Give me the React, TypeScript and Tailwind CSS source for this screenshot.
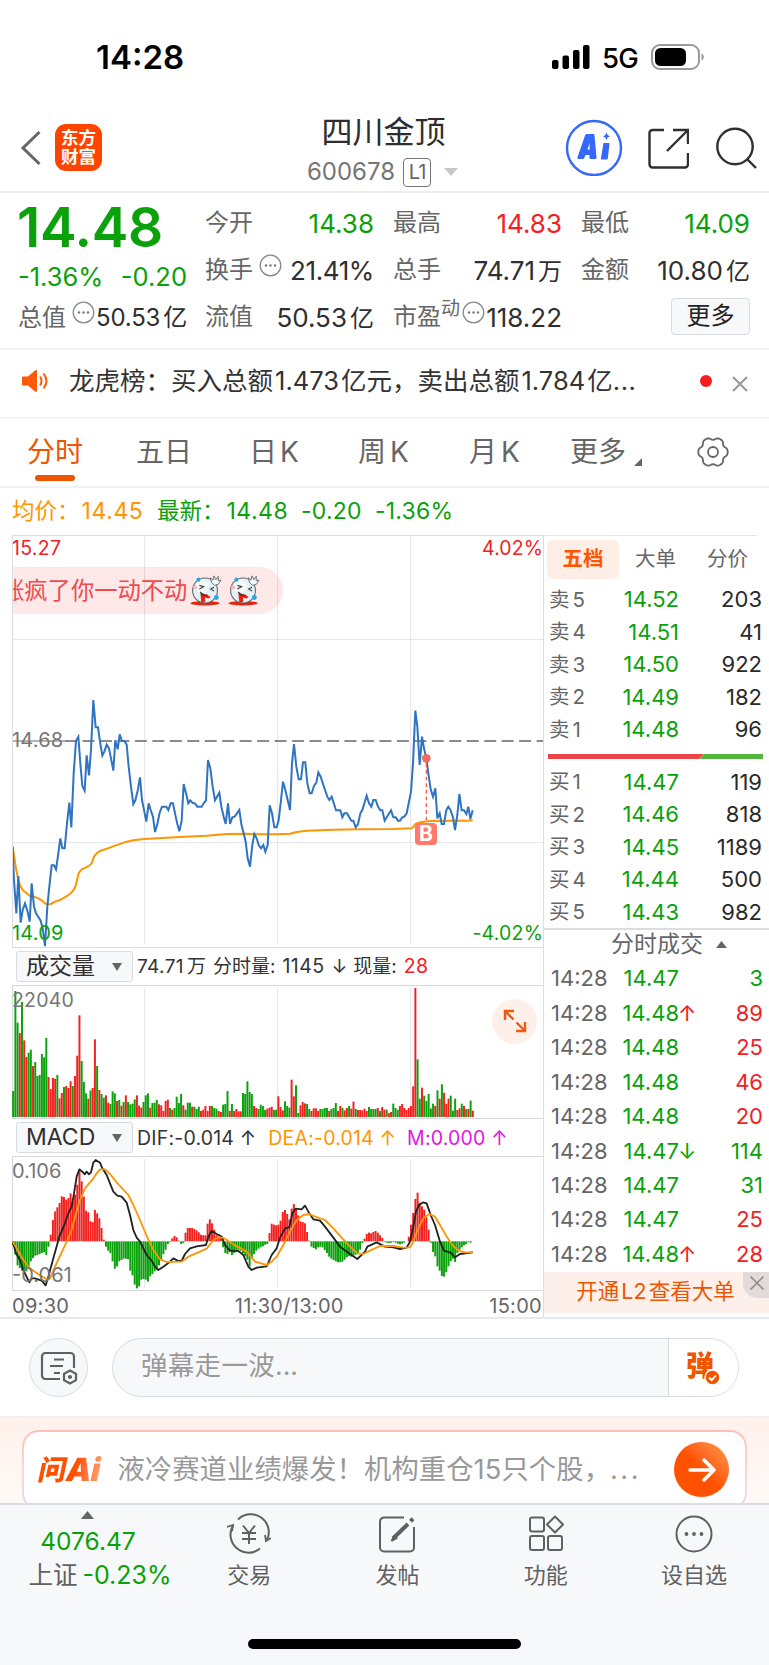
import type { ReactNode } from 'react'

const GREEN = 'text-[#0aa10a]'
const RED = 'text-[#f3201f]'

const asks = [
  ['卖5', '14.52', '203'],
  ['卖4', '14.51', '41'],
  ['卖3', '14.50', '922'],
  ['卖2', '14.49', '182'],
  ['卖1', '14.48', '96'],
]

const bids = [
  ['买1', '14.47', '119'],
  ['买2', '14.46', '818'],
  ['买3', '14.45', '1189'],
  ['买4', '14.44', '500'],
  ['买5', '14.43', '982'],
]

const ticks = [
  { price: '14.47', dir: '', vol: '3', up: false },
  { price: '14.48', dir: '↑', vol: '89', up: true },
  { price: '14.48', dir: '', vol: '25', up: true },
  { price: '14.48', dir: '', vol: '46', up: true },
  { price: '14.48', dir: '', vol: '20', up: true },
  { price: '14.47', dir: '↓', vol: '114', up: false },
  { price: '14.47', dir: '', vol: '31', up: false },
  { price: '14.47', dir: '', vol: '25', up: true },
  { price: '14.48', dir: '↑', vol: '28', up: true },
]

// chart series share one x axis: 240 minutes over 1596 units, starting at 36
const BAR = 6.63

const priceLine =
  '38,680 42,780 49,880 55,768 62,908 68,870 75,850 82,872 89,905 95,790 102,860 108,880 122,902 128,925 135,978 142,860 148,800 155,736 162,736 168,748 175,700 181,655 187,685 194,685 201,610 208,548 214,622 221,460 228,363 235,350 241,430 247,498 254,512 260,406 267,466 273,390 280,240 287,322 294,322 300,365 307,407 313,395 320,374 327,385 333,415 340,452 346,360 353,388 359,343 366,363 373,363 380,374 386,440 393,500 400,552 406,541 413,512 420,472 426,540 433,575 439,605 446,550 452,570 459,590 465,636 472,612 479,578 486,560 499,560 505,570 512,550 519,550 525,580 532,612 538,634 545,602 551,492 558,520 565,550 571,541 578,549 585,550 592,560 605,560 611,550 618,541 624,420 631,445 638,500 645,541 651,530 658,518 664,560 671,590 677,612 684,550 690,612 697,592 704,590 711,580 718,570 724,612 731,640 737,665 743,715 750,740 757,675 763,642 770,655 776,675 783,685 790,675 796,695 803,675 809,556 816,580 823,622 830,622 836,600 843,540 849,485 856,510 863,540 870,570 876,430 882,372 889,440 896,478 903,478 909,427 916,427 922,490 929,520 935,520 942,498 949,488 955,457 962,470 970,495 982,530 988,540 995,530 1008,571 1021,571 1027,592 1033,580 1041,580 1054,602 1060,602 1067,622 1074,612 1081,580 1087,570 1100,527 1107,550 1114,560 1120,540 1127,540 1134,560 1141,571 1147,571 1154,602 1160,592 1173,571 1180,592 1187,592 1194,602 1200,602 1207,592 1213,590 1220,580 1233,515 1239,430 1246,272 1252,320 1259,435 1266,350 1272,385 1279,415 1285,460 1292,508 1299,530 1306,505 1312,595 1319,580 1325,612 1332,612 1339,570 1345,560 1352,571 1359,592 1365,630 1372,585 1378,522 1385,571 1392,571 1399,582 1405,560 1411,597 1418,571'

const averageLine =
  '38,680 48,745 55,780 61,798 68,810 78,818 90,828 102,830 115,835 126,842 135,850 142,853 152,852 165,845 180,840 193,833 205,825 214,818 222,808 227,797 230,785 235,762 239,755 245,748 258,742 270,735 275,730 280,715 284,707 290,700 300,693 330,683 345,677 365,670 380,665 400,661 433,657 540,651 620,647 680,642 740,641 770,643 832,643 870,641 890,636 920,632 1000,629 1080,628 1180,627 1235,625 1240,621 1245,613 1253,609 1265,606 1290,603 1350,602 1400,602 1418,601'

const volumes =
  'g78 g378 g283 r252 g345 r230 r180 g193 g202 r153 g165 g123 g126 g189 g179 g237 r120 r84 r117 r115 g126 r56 r72 g90 r93 r87 r107 g93 r123 r184 r305 g168 g105 g71 r55 g80 r87 r233 g153 r81 g69 g58 r65 r43 g39 g77 g71 r48 g51 r34 g45 r65 g45 g38 g40 g53 r65 r34 r28 g45 g65 g71 r28 g42 g43 g51 r38 r35 r18 r48 r52 g27 r22 g27 g61 g42 g69 r35 g22 g43 g43 r31 g31 g24 g31 r18 r22 r33 r18 r33 g33 g27 g25 r18 r15 g37 g39 g78 r18 g39 r18 r24 r17 r17 g72 g69 g107 g75 g69 r33 r27 g24 g37 g33 g21 r25 r28 r31 g21 g22 r62 r30 r20 g47 g33 g28 r112 r62 g95 g12 r35 r45 r41 g39 g24 r18 r26 r26 r18 g24 g24 g27 g27 r18 g24 g27 g42 r18 r33 g27 r20 r27 g33 r25 r46 g24 r21 r21 r20 r25 r18 g30 g24 g24 g24 r27 g18 r30 r22 g22 r12 r15 g40 g27 g22 r33 r39 r27 r21 r27 r33 r92 r387 g173 g55 r88 g64 g48 g69 g26 g40 r33 g80 r55 g98 r73 r40 r55 g64 g19 g55 r21 r26 g40 r33 g24 r24 g49 r19'.split(
    ' ',
  )

const macd = [
  -12, -40, -72, -80, -88, -95, -90, -75, -60, -50, -43, -41, -38, -35, -33, -41, -16, 20, 64, 90, 102, 115, 135, 133,
  125, 130, 144, 120, 140, 170, 210, 180, 134, 92, 87, 60, 58, 94, 84, 69, 40, 5, -16, -28, -35, -60, -82, -75, -60,
  -56, -52, -52, -54, -88, -102, -130, -141, -135, -115, -113, -115, -121, -105, -98, -90, -85, -72, -56, -38, -25, -8,
  -2, 9, 16, 12, 2, -8, -5, 26, 40, 40, 40, 37, 33, 27, 20, 18, 18, 53, 66, 54, 35, 18, 14, 10, -18, -35, -38, -32,
  -41, -35, -28, -25, -28, -35, -45, -55, -75, -52, -38, -28, -22, -18, -15, -10, -8, 25, 53, 50, 48, 50, 62, 88, 94,
  82, 66, 98, 112, 96, 78, 60, 58, 54, 28, 2, -16, -20, -24, -18, -16, -18, -26, -35, -46, -52, -56, -60, -63, -62,
  -61, -55, -48, -44, -46, -42, -40, -35, -25, -5, 8, 22, 26, 24, 28, 31, 26, 18, 10, -2, -4, -5, -4, -2, -4, -7, -9,
  -7, -4, 0, 14, 50, 85, 127, 146, 116, 105, 95, 72, 35, -4, -32, -45, -75, -88, -104, -106, -92, -75, -60, -52, -62,
  -35, -25, -18, -12, -8, -2, -4, 0,
]

const difLine =
  '38,905 48,940 60,960 70,990 82,1015 88,1027 95,1015 105,1015 125,1022 137,1036 145,1010 160,955 178,890 195,850 205,820 215,800 222,760 230,710 238,688 247,695 254,703 260,695 267,703 273,697 280,668 287,660 300,668 307,685 320,705 330,730 340,755 352,767 365,770 380,788 390,825 400,870 410,893 420,905 440,945 455,962 465,980 475,990 490,980 510,965 520,955 535,963 545,963 555,942 570,925 590,919 618,915 625,890 635,873 650,882 665,890 675,915 690,932 715,933 730,945 745,980 755,990 770,983 800,979 815,945 830,925 840,893 855,865 868,862 877,820 887,806 905,808 915,797 928,820 940,838 960,842 975,860 1000,893 1020,920 1045,938 1072,957 1095,935 1102,920 1130,907 1155,920 1180,922 1200,927 1220,923 1230,905 1240,860 1248,815 1257,795 1270,787 1280,790 1292,825 1305,855 1320,905 1332,932 1352,938 1365,952 1380,942 1418,937'

const deaLine =
  '38,905 50,925 70,960 90,985 115,1003 140,1018 150,1015 165,980 200,905 215,870 225,830 240,780 255,745 280,715 290,700 300,688 315,688 330,702 350,727 385,765 400,795 420,840 440,888 460,930 480,958 500,966 545,965 565,950 600,935 620,926 640,900 655,892 670,893 700,913 740,935 765,965 800,975 815,965 830,950 850,915 870,875 890,840 910,825 928,822 945,830 975,840 1000,865 1025,893 1050,920 1072,940 1090,942 1110,932 1140,918 1180,918 1210,923 1230,922 1240,905 1255,865 1270,835 1288,822 1305,830 1320,855 1340,890 1360,918 1375,932 1395,937 1418,937'

function GridLines({ top, bottom }: { top: number; bottom: number }) {
  return (
    <g stroke="#e2e3ec" strokeWidth="3">
      {[434, 833, 1232].map((x) => (
        <line key={x} x1={x} x2={x} y1={top} y2={bottom} />
      ))}
    </g>
  )
}

function SickFace() {
  return (
    <svg width="33" height="33" viewBox="0 0 35 33">
      <ellipse cx="17" cy="30" rx="15.5" ry="2.4" fill="#e8220c" />
      <circle cx="17" cy="16.5" r="13.2" fill="#e3f0f6" stroke="#66696d" strokeWidth="1.200" />
      <circle cx="14" cy="12" r="7" fill="#f4fafc" />
      <path d="M24 8l-1.500-5 3 2.500L26.500 1l2 4L31 1.500v4.500l3-.5-3 4.500-4 1z" fill="#f3f8fa" stroke="#66696d" strokeWidth="1" />
      <path d="M11 11l4.500 1.500-4.500 2.500M26.500 13l-3.500 2 3.500 2" fill="none" stroke="#444" strokeWidth="1.300" />
      <circle cx="6.500" cy="13" r="2.200" fill="#ffb6bd" />
      <path d="M12 18.500c3 1.500 8 2 11 5l-2.500 1.500-3.500-1v5h-4z" fill="#e8220c" />
      <path d="M12 18l3 3.500h5" fill="none" stroke="#333" strokeWidth="1.200" />
      <circle cx="10" cy="5" r="2.200" fill="#22a7e8" />
      <circle cx="29" cy="24" r="2.600" fill="#22a7e8" />
    </svg>
  )
}

function Dots() {
  return (
    <svg width="23" height="23" viewBox="0 0 23 23" className="shrink-0">
      <circle cx="11.500" cy="11.500" r="10.300" fill="none" stroke="#8a8a8a" strokeWidth="1.300" />
      <g fill="#777">
        <circle cx="7" cy="11.500" r="1.200" />
        <circle cx="11.500" cy="11.500" r="1.200" />
        <circle cx="16" cy="11.500" r="1.200" />
      </g>
    </svg>
  )
}

function StatusBar() {
  return (
    <div className="flex h-[115px] items-center justify-between pl-[96px] pr-[64px]">
      <span className="mt-[1px] text-[33px] font-semibold text-black">14:28</span>
      <div className="flex items-center">
        <svg width="40" height="26" viewBox="0 0 40 26">
          <rect x="1" y="16" width="6.500" height="9" rx="2" />
          <rect x="11.500" y="11.500" width="6.500" height="13.500" rx="2" />
          <rect x="22" y="6" width="6.500" height="19" rx="2" />
          <rect x="32" y="1" width="6.500" height="24" rx="2" />
        </svg>
        <span className="ml-[11px] mt-[3px] text-[27.500px] font-medium tracking-[-0.8px] text-black">5G</span>
        <svg width="54" height="26" viewBox="0 0 54 26" className="ml-[13px]">
          <rect x="1" y="1" width="47" height="24" rx="8" fill="none" stroke="#9a9a9a" strokeWidth="2" />
          <rect x="4" y="4" width="31" height="18" rx="5.500" />
          <path d="M50.500 9.500c3 1 3 6 0 7z" fill="#9a9a9a" />
        </svg>
      </div>
    </div>
  )
}

function Header() {
  return (
    <header className="flex h-[78px] items-center border-b-2 border-[#eeeeee] pb-[2px] pl-[20px] pr-[12px]">
      <svg width="22" height="36" viewBox="0 0 22 36" className="mt-[-8px]">
        <path d="M19.500 2L3 18l16.500 16" fill="none" stroke="#666" strokeWidth="3" />
      </svg>
      <div className="ml-[13px] mt-[-9px] flex h-[47px] w-[47px] flex-col items-center justify-center rounded-[11px] bg-[#ff4400] text-[17.500px] font-bold leading-[19px] text-white">
        <span>东方</span>
        <span>财富</span>
      </div>
      <div className="ml-[198px] mt-[-4px] flex w-[165px] flex-col items-center">
        <span className="ml-[2px] text-[31px] leading-[38px] text-[#2d2d2d]">四川金顶</span>
        <div className="mt-[7px] flex h-[29px] items-center">
          <span className="text-[24px] text-[#757575]">600678</span>
          <span className="ml-[8px] flex h-[29px] w-[28px] items-center justify-center rounded-[4px] border-[1.5px] border-[#777] text-[20px] tracking-[-1px] text-[#666]">
            L1
          </span>
          <svg width="14" height="8" viewBox="0 0 14 8" className="ml-[13px]">
            <path d="M0 0h14L7 8z" fill="#c8c8c8" />
          </svg>
        </div>
      </div>
      <svg width="58" height="58" viewBox="0 0 58 58" className="ml-auto mt-[-9px] shrink-0">
        <circle cx="29" cy="30" r="27" fill="none" stroke="#3568fb" strokeWidth="2.400" />
        <g fill="#3568fb">
          <path
            fillRule="evenodd"
            d="M20 17.500c.5-1 1-1.500 2-1.500h6c1 0 1.500.5 1.500 1.500l2 22c0 1-.5 1.500-1.500 1.500h-4c-1 0-1.500-.5-1.500-1.500V37h-4l-1 2.500c-.4 1-1 1.500-2 1.500h-4c-1 0-1.500-.7-1-1.700zM22.500 31.500h2.200l-.2-6.500z"
          />
          <path d="M38.500 25h6l-1.600 15c-.2 1-.6 1.500-1.600 1.500h-4c-1 0-1.500-.5-1.300-1.500z" />
          <path d="M41.500 14c.8 3 1.400 3.600 4 4.200-2.600.8-3.200 1.400-4 4.200-.8-2.800-1.400-3.400-4-4.200 2.600-.6 3.200-1.200 4-4.200z" />
        </g>
      </svg>
      <svg width="42" height="42" viewBox="0 0 42 42" className="ml-[24px] mt-[-8px] shrink-0" fill="none" stroke="#2f2f2f" strokeWidth="2.400">
        <path d="M17 3H5.500A3 3 0 0 0 2.500 6v31.500a3 3 0 0 0 3 3H38a3 3 0 0 0 3-3V26" />
        <path d="M26 3h15v14M41 3L20 24" />
      </svg>
      <svg width="42" height="42" viewBox="0 0 42 42" className="ml-[26px] mt-[-8px] shrink-0" fill="none" stroke="#2f2f2f" strokeWidth="2.400">
        <circle cx="20" cy="19.500" r="17.700" />
        <path d="M32 32l9 9" />
      </svg>
    </header>
  )
}

function Amount({ value, unit }: { value: string; unit: string }) {
  return (
    <>
      {value}
      <span className="ml-[3px] text-[24px]">{unit}</span>
    </>
  )
}

function Stat({ label, children, tone = 'text-[#2f2f2f]' }: { label: ReactNode; children: ReactNode; tone?: string }) {
  return (
    <div className="-ml-px flex items-center justify-between">
      <span className="flex items-center text-[24px] text-[#666]">{label}</span>
      <span className={`text-[26px] ${tone}`}>{children}</span>
    </div>
  )
}

function Quote() {
  return (
    <section className="flex h-[157px] gap-[19px] border-b-2 border-[#f2f2f2] pl-[19px] pt-[7px]">
      <div className="w-[168px]">
        <div className={`ml-[-2px] flex h-[54px] items-center text-[55px] font-semibold tracking-[-0.3px] ${GREEN}`}>14.48</div>
        <div className={`-ml-px mt-[6px] flex h-[34px] items-center justify-between text-[25.500px] ${GREEN}`}>
          <span>-1.36%</span>
          <span>-0.20</span>
        </div>
        <div className="ml-[-1px] mt-px flex h-[46px] items-center text-[24px] text-[#666]">
          总值
          <span className="ml-[6px] -translate-y-[5px]">
            <Dots />
          </span>
          <span className="ml-auto text-[24px] tracking-[-0.2px] text-[#2f2f2f]">
            <Amount value="50.53" unit="亿" />
          </span>
        </div>
      </div>
      <div className="grid h-[141px] grid-cols-[168px_168px_168px] grid-rows-3 gap-x-[20px]">
        <Stat label="今开" tone={GREEN}>
          14.38
        </Stat>
        <Stat label="最高" tone={RED}>
          14.83
        </Stat>
        <Stat label="最低" tone={GREEN}>
          14.09
        </Stat>
        <Stat
          label={
            <>
              换手
              <span className="ml-[6px] -translate-y-[5px]">
                <Dots />
              </span>
            </>
          }
        >
          <span className="tracking-[-0.4px]">21.41%</span>
        </Stat>
        <Stat label="总手">
          <Amount value="74.71" unit="万" />
        </Stat>
        <Stat label="金额">
          <Amount value="10.80" unit="亿" />
        </Stat>
        <Stat label="流值">
          <Amount value="50.53" unit="亿" />
        </Stat>
        <Stat
          label={
            <>
              市盈
              <span className="-translate-y-[8px] text-[19px]">动</span>
              <span className="ml-[2px] -translate-y-[5px]">
                <Dots />
              </span>
            </>
          }
        >
          118.22
        </Stat>
        <div className="flex items-center justify-end">
          <button className="mb-[2px] flex h-[37px] w-[79px] items-center justify-center rounded-[4px] border-[1.5px] border-[#d9dbe3] bg-[#f7f8fa] text-[24px] text-[#222]">
            更多
          </button>
        </div>
      </div>
    </section>
  )
}

function News() {
  return (
    <div className="flex h-[69px] items-center border-b-2 border-[#f5f5f5] pb-[5px] pl-[21px] pr-[21px]">
      <svg width="28" height="24" viewBox="0 0 28 24">
        <path d="M2 7.500h5l7-6c1-.8 2-.3 2 1v19c0 1.300-1 1.800-2 1l-7-6H2a1 1 0 0 1-1-1v-7a1 1 0 0 1 1-1z" fill="#ff5a0a" />
        <path d="M19 7.500c2 3 2 6 0 9M22.500 4.500c4 5 4 10 0 15" fill="none" stroke="#ff5a0a" strokeWidth="2" />
      </svg>
      <span className="ml-[20px] text-[25.500px] text-[#333]">
        龙虎榜：买入总额<span className="mx-[2px]">1.473</span>亿元，卖出总额<span className="mx-[2px]">1.784</span>亿
        <span className="tracking-[0.6px]">...</span>
      </span>
      <span className="ml-auto h-[12px] w-[12px] rounded-full bg-[#f3201f]" />
      <svg width="16" height="16" viewBox="0 0 16 16" className="ml-[20px] mt-[6px]">
        <path d="M1 1l14 14M15 1L1 15" stroke="#999" strokeWidth="2" />
      </svg>
    </div>
  )
}

// six shallow lobes around the centre
function gearPath(cx: number, cy: number) {
  let d = ''
  for (let i = 0; i < 72; i++) {
    const a = (i / 72) * Math.PI * 2
    const r = 13.7 + 1.3 * Math.cos(6 * a) - 0.3 * Math.cos(12 * a)
    d += `${i ? 'L' : 'M'}${(cx + r * Math.cos(a)).toFixed(2)} ${(cy + r * Math.sin(a)).toFixed(2)}`
  }
  return d + 'z'
}

function Tabs() {
  return (
    <nav className="flex h-[69px] border-b-2 border-[#f2f2f2] pl-[27px] pr-[40px] text-[28px] leading-[67px] text-[#666]">
      <div className="flex w-[56px] flex-col text-[#ee5500]">
        <span className="h-[56px]">分时</span>
        <span className="ml-[8px] h-[6px] w-[40px] rounded-full bg-[#ee5500]" />
      </div>
      <span className="ml-[53px] w-[56px]">五日</span>
      <span className="ml-[57px] w-[50px]">
        日<span className="ml-[3px]">K</span>
      </span>
      <span className="ml-[59px] w-[53px]">
        周<span className="ml-[4px]">K</span>
      </span>
      <span className="ml-[58px] w-[52px]">
        月<span className="ml-[4px]">K</span>
      </span>
      <span className="ml-[49px] w-[57px]">更多</span>
      <svg width="8" height="8" viewBox="0 0 8 8" className="ml-[7px] mt-[39px]">
        <path d="M8 0v8H0z" fill="#666" />
      </svg>
      <svg width="32" height="32" viewBox="0 0 32 32" className="ml-auto mt-[17px]" fill="none" stroke="#666" strokeWidth="1.800">
        <path d={gearPath(16, 16)} strokeLinejoin="round" />
        <circle cx="16" cy="16" r="5" />
      </svg>
    </nav>
  )
}

function Summary() {
  return (
    <div className="flex h-[47px] items-center pl-[12px] text-[22.500px]">
      <span className="w-[145px] text-[#ff9500]">
        均价：<span className="ml-[2px] text-[23px] tracking-[0.600px]">14.45</span>
      </span>
      <span className={`w-[144px] ${GREEN}`}>
        最新：<span className="ml-[2px] text-[23px] tracking-[0.500px]">14.48</span>
      </span>
      <span className={`w-[74px] text-[23px] tracking-[0.200px] ${GREEN}`}>-0.20</span>
      <span className={`text-[23px] tracking-[0.200px] ${GREEN}`}>-1.36%</span>
    </div>
  )
}

function Picker({ children }: { children: ReactNode }) {
  return (
    <div className="ml-[4px] flex h-[31px] w-[117px] shrink-0 items-center justify-between rounded-[3px] border border-[#d9dbe3] bg-[#f7f8fa] pl-[9px] pr-[10px] pt-px text-[23px] text-[#2f2f2f]">
      {children}
      <svg width="10" height="8" viewBox="0 0 10 8">
        <path d="M0 0h10L5 8z" fill="#666" />
      </svg>
    </div>
  )
}

function PriceChart() {
  return (
    <div className="relative h-[413px] overflow-hidden border-b border-l border-t border-[#dcdde3]">
      <svg width="532" height="412" viewBox="36 -255 1596 1236" className="absolute -left-px -top-px" fill="none">
        <GridLines top={-250} bottom={974} />
        <g stroke="#e2e3ec" strokeWidth="3">
          <line x1="36" x2="1632" y1="58" y2="58" />
          <line x1="36" x2="1632" y1="668" y2="668" />
        </g>
        <line x1="36" x2="195" y1="363" y2="363" stroke="#666" strokeWidth="3" />
        <line x1="195" x2="1632" y1="363" y2="363" stroke="#666" strokeWidth="4" strokeDasharray="36 16.400" />
        <polyline points={averageLine} stroke="#ff9500" strokeWidth="6" strokeLinejoin="round" />
        <polyline points={priceLine} stroke="#2f73c1" strokeWidth="6" strokeLinejoin="miter" />
        <line x1="1279" x2="1279" y1="430" y2="606" stroke="#ff5a4d" strokeWidth="4" strokeDasharray="11 9" />
        <circle cx="1279" cy="415" r="13" fill="#f2685f" />
      </svg>
      <span className="absolute -left-px top-0 text-[19.500px] leading-[24px] tracking-[0.3px] text-[#f3201f]">15.27</span>
      <span className="absolute right-0 top-0 text-[19.500px] leading-[24px] tracking-[0.1px] text-[#f3201f]">4.02%</span>
      <span className="absolute -left-px top-[192px] text-[20px] leading-[24px] tracking-[0.2px] text-[#757575]">14.68</span>
      <span className="absolute bottom-[2px] left-[-1px] text-[20px] leading-[24px] tracking-[0.2px] text-[#0aa10a]">14.09</span>
      <span className="absolute bottom-[2px] right-0 text-[19.500px] leading-[24px] tracking-[0.2px] text-[#0aa10a]">-4.02%</span>
      <div className="absolute -left-px top-[31px] flex h-[47px] w-[271px] items-center overflow-hidden rounded-r-full bg-[#f3201f]/10">
        <span className="ml-[-11px] mt-[3px] text-[23.300px] text-[#ee4b4e]">涨疯了你一动不动</span>
        <span className="ml-[2px]">
          <SickFace />
        </span>
        <span className="ml-[5px]">
          <SickFace />
        </span>
      </div>
      <span className="absolute left-[402px] top-[287px] flex h-[22px] w-[22px] items-center justify-center rounded-[4px] bg-[#ff7a6b] text-[21px] font-bold leading-none text-white">
        B
      </span>
    </div>
  )
}

function VolumeChart() {
  return (
    <div className="relative h-[134px] border-b border-l border-t border-[#d5d7dd]">
      <svg width="532" height="132" viewBox="36 138 1596 396" className="absolute -left-px top-0">
        <GridLines top={143} bottom={531} />
        {volumes.map((v, i) => {
          const h = Number(v.slice(1))
          return (
            <rect key={i} x={36.5 + i * BAR} y={531 - h} width="5.900" height={h} fill={v[0] === 'r' ? '#f3201f' : '#0aa10a'} />
          )
        })}
      </svg>
      <span className="absolute -left-px top-[2px] text-[19.500px] leading-[24px] tracking-[0.2px] text-[#757575]">22040</span>
      <div className="absolute left-[479px] top-[13px] flex h-[45px] w-[45px] items-center justify-center rounded-full bg-[#fdf0ea]">
        <svg width="24" height="24" viewBox="0 0 24 24" fill="none" stroke="#f05a0a" strokeWidth="2.400">
          <path d="M2 11V2h9M2.500 2.500l8 8M22 13v9h-9M21.500 21.500l-8-8" />
        </svg>
      </div>
    </div>
  )
}

function MacdChart() {
  return (
    <div className="relative h-[135px] border-b border-l border-t border-[#d5d7dd]">
      <svg width="532" height="133" viewBox="36 651 1596 399" className="absolute -left-px top-0">
        <GridLines top={657} bottom={1044} />
        {macd.map((v, i) => (
          <rect
            key={i}
            x={36.5 + i * BAR}
            y={v > 0 ? 904 - v : 904}
            width="5.900"
            height={Math.abs(v)}
            fill={v > 0 ? '#f3201f' : '#0aa10a'}
          />
        ))}
        <g fill="none" strokeWidth="5.500" strokeLinejoin="round">
          <polyline points={difLine} stroke="#222" />
          <polyline points={deaLine} stroke="#ff9500" />
        </g>
      </svg>
      <span className="absolute -left-px top-[2px] text-[20px] leading-[24px] text-[#757575]">0.106</span>
      <span className="absolute bottom-[3px] left-[-1px] text-[20px] leading-[24px] text-[#757575]">-0.061</span>
    </div>
  )
}

function Charts() {
  return (
    <div className="w-[544px] border-r border-[#dcdde3] pl-[12px]">
      <PriceChart />
      <div className="flex h-[37px] items-center text-[19px] text-[#333]">
        <Picker>成交量</Picker>
        <span className="ml-[4px] mt-[2px] flex items-baseline">
          <span className="tracking-[0.4px]">74.71</span>
          <span className="ml-[3px]">万</span>
          <span className="ml-[7px]">分时量:</span>
          <span className="ml-[7px] text-[19.500px] tracking-[0.4px]">1145</span>
          <span className="ml-[7px]">↓</span>
          <span className="ml-[6px]">现量:</span>
          <span className={`ml-[7px] text-[19.500px] tracking-[0.4px] ${RED}`}>28</span>
        </span>
      </div>
      <VolumeChart />
      <div className="flex h-[37px] items-center text-[19.500px] tracking-[0.2px] text-[#333]">
        <Picker>
          <span className="tracking-normal">MACD</span>
        </Picker>
        <span className="ml-[4px] mt-[2px]">DIF:-0.014 ↑</span>
        <span className="ml-[12px] mt-[2px] text-[#ff9500]">DEA:-0.014 ↑</span>
        <span className="ml-[11px] mt-[2px] text-[#e215e2]">M:0.000 ↑</span>
      </div>
      <MacdChart />
      <div className="flex h-[26px] items-center justify-between pr-[1px] pt-[5px] text-[20px] tracking-[0.3px] text-[#666]">
        <span>09:30</span>
        <span className="ml-[20px]">11:30/13:00</span>
        <span>15:00</span>
      </div>
    </div>
  )
}

function Levels({ rows }: { rows: string[][] }) {
  return (
    <div className="pl-[5px] pr-[7px]">
      {rows.map(([label, price, qty]) => (
        <div key={label} className="flex h-[32.500px] items-center text-[22px]">
          <span className="w-[54px] text-[20.500px] text-[#666]">
            {label[0]}
            <span className="ml-[3px]">{label[1]}</span>
          </span>
          <span className={`w-[76px] text-right ${GREEN}`}>{price}</span>
          <span className="ml-auto text-[#2a2a2a]">{qty}</span>
        </div>
      ))}
    </div>
  )
}

function OrderBook() {
  return (
    <aside className="flex flex-1 flex-col">
      <div className="flex h-[48px] w-[213px] items-center border-t border-[#e5e6ea] text-[20.500px] text-[#666]">
        <span className="ml-[3px] flex h-[39px] w-[72px] items-center justify-center rounded-[6px] bg-[#ffeee6] font-bold text-[#ff5500]">
          五档
        </span>
        <span className="ml-[16px]">大单</span>
        <span className="ml-[31px]">分价</span>
      </div>
      <div className="pt-px">
        <Levels rows={asks} />
      </div>
      <svg width="215" height="6" viewBox="0 0 215 6" className="ml-[4px] mt-[8px]">
        <path d="M0 0h156l-5 5H0z" fill="#ea4446" />
        <path d="M156 0h59v5h-64z" fill="#55b83e" />
      </svg>
      <div className="mt-[6px]">
        <Levels rows={bids} />
      </div>
      <div className="-mt-px flex h-[34px] items-center justify-center border-t-2 border-[#dcdde3] pb-[2px] pl-[25px] text-[23px] leading-none text-[#666]">
        分时成交
        <svg width="11" height="7" viewBox="0 0 11 7" className="ml-[13px]">
          <path d="M0 7h11L5.500 0z" fill="#666" />
        </svg>
      </div>
      {ticks.map((t, i) => (
        <div key={i} className="flex h-[34.450px] items-center pl-[7px] pr-[6px] text-[22px]">
          <span className="w-[59px] text-[#666]">14:28</span>
          <span className={`w-[69px] text-right ${GREEN}`}>{t.price}</span>
          <span className={`-ml-px ${t.dir === '↑' ? RED : GREEN}`}>{t.dir}</span>
          <span className={`ml-auto ${t.up ? RED : GREEN}`}>{t.vol}</span>
        </div>
      ))}
      <div className="relative flex h-[41px] items-center justify-center bg-[#fdf0ea] pb-[2px] pr-[2px] text-[21.500px] text-[#ee5500]">
        开通<span className="mx-[2px]">L2</span>查看大单
        <span className="absolute right-0 top-0 flex h-[26px] w-[26px] items-center justify-center rounded-bl-[14px] bg-[#e3dbd9]">
          <svg width="14" height="14" viewBox="0 0 14 14" className="ml-[2px] mt-[-4px]">
            <path d="M.5.5l13 13M13.500.5l-13 13" stroke="#888" strokeWidth="1.500" />
          </svg>
        </span>
      </div>
    </aside>
  )
}

function CommentBar() {
  return (
    <div className="flex h-[97px] items-center pl-[29px] pr-[30px]">
      <div className="flex h-[59px] w-[59px] items-center justify-center rounded-full border-[1.5px] border-[#d9dbe3] bg-[#f7f8fa]">
        <svg width="38" height="34" viewBox="0 0 38 34" fill="none" stroke="#606060" strokeWidth="2.200">
          <path d="M20 28H5.500a3.500 3.500 0 0 1-3.500-3.500v-19A3.500 3.500 0 0 1 5.500 2h25A3.500 3.500 0 0 1 34 5.500V17" />
          <path d="M14 8.500h10M10 15h13M14 22h6" />
          <path d="M30 19.500l6 3.300v6.400l-6 3.300-6-3.300v-6.400z" />
          <circle cx="30" cy="26" r="1" />
        </svg>
      </div>
      <div className="ml-[24px] flex h-[59px] flex-1 overflow-hidden rounded-full border-[1.5px] border-[#d9dbe3] bg-[#f7f8fa]">
        <span className="flex-1 pl-[28px] text-[26.500px] leading-[53px] tracking-[0.3px] text-[#999]">
          弹幕走一波<span className="tracking-normal">...</span>
        </span>
        <span className="relative w-[70px] border-l-[1.5px] border-[#d9dbe3] bg-white pl-[17px] text-[28px] font-black leading-[55px] text-[#f05500]">
          弹
          <svg width="17" height="17" viewBox="0 0 17 17" className="absolute left-[35px] top-[30px]">
            <circle cx="8.500" cy="8.500" r="7.500" fill="#f05500" stroke="#fff" strokeWidth="1.500" />
            <path d="M5 8.500l2.700 2.700L12 6.500" fill="none" stroke="#fff" strokeWidth="1.800" />
          </svg>
        </span>
      </div>
    </div>
  )
}

function AskAi() {
  return (
    <div className="h-[87px] overflow-hidden border-t border-[#eeeeee] bg-linear-to-b from-[#fff1ec] to-[#fffaf7] px-[22px] pt-[13px]">
      <div className="h-[80px] rounded-[17px] bg-linear-to-b from-[#ffc0b5] via-[#fbd8d4] to-[#dcdcf0] p-[2px]">
        <div className="flex h-[76px] items-center rounded-[15px] bg-white pb-[1px] pl-[15px] pr-[16px]">
          <span className="flex -skew-x-12 items-center bg-linear-to-r from-[#ff5000] from-60% to-[#ff9a66] bg-clip-text pr-px text-[32px] font-black leading-[38px] tracking-[-0.5px] text-transparent">
            <span className="text-[28px]">问</span>
            <span>Ai</span>
          </span>
          <span className="ml-[16px] mt-[2px] text-[27.300px] tracking-[0.1px] text-[#999]">液冷赛道业绩爆发！机构重仓15只个股，</span>
          <span className="-ml-px mt-[2px] text-[27px] tracking-[2.5px] text-[#999]">...</span>
          <span className="ml-auto flex h-[55px] w-[55px] shrink-0 items-center justify-center rounded-full bg-linear-to-tr from-[#ff5200] from-50% to-[#ff9a4a]">
            <svg width="28" height="24" viewBox="0 0 28 24" fill="none" stroke="#fff" strokeWidth="3.500" strokeLinecap="round" strokeLinejoin="round">
              <path d="M2 12h24M16 2l10 10-10 10" />
            </svg>
          </span>
        </div>
      </div>
    </div>
  )
}

function NavItem({ label, children }: { label: string; children: ReactNode }) {
  return (
    <div className="flex w-[148.300px] flex-col items-center pt-[8px]">
      <svg width="44" height="42" viewBox="0 0 44 42" fill="none" stroke="#606060" strokeWidth="2">
        {children}
      </svg>
      <span className="mt-[2px] text-[22px] leading-[36px] text-[#606060]">{label}</span>
    </div>
  )
}

function BottomNav() {
  return (
    <footer className="h-[162px] border-t-2 border-[#dadce2] bg-[#f7f8fa]">
      <div className="flex h-[134px]">
        <div className="flex w-[175px] flex-col items-center pt-[6px]">
          <svg width="13" height="8" viewBox="0 0 13 8">
            <path d="M0 8h13L6.500 0z" fill="#666" />
          </svg>
          <span className={`ml-px mt-[3px] text-[24.500px] leading-[38px] ${GREEN}`}>4076.47</span>
          <span className="ml-[25px] mt-[-3px] text-[24.500px] leading-[36px] text-[#606060]">
            上证 <span className={`-ml-[2px] text-[25px] ${GREEN}`}>-0.23%</span>
          </span>
        </div>
        <NavItem label="交易">
          <path d="M11 6.500A18 18 0 0 1 40 27M33 35.500A18 18 0 0 1 6 12.500" />
          <path d="M0 14l6-2-1 6M44 25l-5 3-1-6" strokeWidth="1.800" />
          <path d="M16 12.500l6 7.500 6-7.500M15 20h14M15 26h14M22 20v11" />
        </NavItem>
        <NavItem label="发帖">
          <path d="M29 4.500H9A4 4 0 0 0 5 8.500v26A4 4 0 0 0 9 38.500h26a4 4 0 0 0 4-4V14" />
          <path d="M33 11L18 25.500" strokeWidth="4" />
          <path d="M19.500 23l-3 5 5-3z" />
          <path d="M35.500 8.200L38 5.800" strokeWidth="4" />
        </NavItem>
        <NavItem label="功能">
          <rect x="6" y="4.500" width="14" height="14" rx="2" />
          <rect x="6" y="23" width="14" height="14" rx="2" />
          <rect x="24" y="23" width="14" height="14" rx="2" />
          <path d="M31 3.500l8 8-8 8-8-8z" strokeLinejoin="round" />
        </NavItem>
        <NavItem label="设自选">
          <circle cx="22" cy="21" r="17.500" />
          <g fill="#606060" stroke="none">
            <circle cx="14.500" cy="21" r="1.900" />
            <circle cx="22" cy="21" r="1.900" />
            <circle cx="29.500" cy="21" r="1.900" />
          </g>
        </NavItem>
      </div>
      <div className="mx-auto h-[10px] w-[273px] rounded-full bg-black" />
    </footer>
  )
}

export default function App() {
  return (
    <div className="flex h-[1665px] w-[769px] flex-col overflow-hidden whitespace-nowrap bg-white font-[Inter,'Noto_Sans_CJK_SC',sans-serif]">
      <StatusBar />
      <Header />
      <Quote />
      <News />
      <Tabs />
      <Summary />
      <div className="flex h-[785px] border-b-2 border-[#e8e9ed]">
        <Charts />
        <OrderBook />
      </div>
      <CommentBar />
      <AskAi />
      <BottomNav />
    </div>
  )
}
